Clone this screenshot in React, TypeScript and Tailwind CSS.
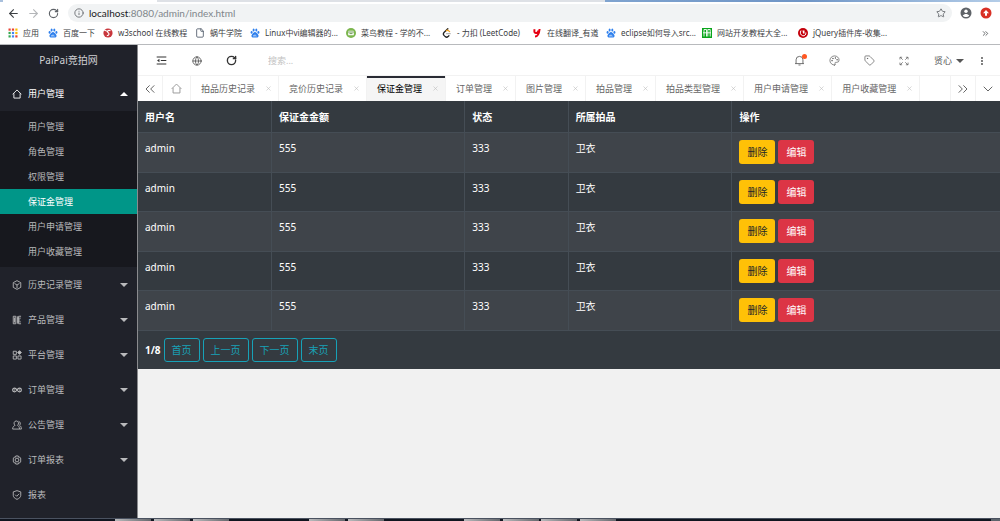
import type { ReactNode } from "react";
import {
  ArrowLeft,
  ArrowRight,
  ChevronDown,
  ChevronsLeft,
  ChevronsRight,
  File,
  Globe,
  Info,
  Palette,
  RotateCw,
  Star,
  Tag,
  X,
} from "lucide-react";

type Bookmark = { label: string; icon: ReactNode; className: string };
type MenuItem = { label: string; icon: ReactNode; children?: string[] };

/* Bookmark icons */

function AppsIcon() {
  const colors = ["#ea4335", "#ea4335", "#fbbc05", "#34a853", "#4285f4", "#fbbc05", "#34a853", "#4285f4", "#ea4335"];
  return (
    <svg viewBox="0 0 10 10" className="size-[10px]">
      {colors.map((fill, i) => (
        <rect key={i} x={0.5 + (i % 3) * 3.4} y={0.5 + Math.floor(i / 3) * 3.4} width="2.2" height="2.2" fill={fill} />
      ))}
    </svg>
  );
}

function PawIcon() {
  return (
    <svg viewBox="0 0 10 10" className="size-[10px]" fill="#2f80ed">
      <ellipse cx="1.6" cy="4.4" rx="1" ry="1.4" />
      <ellipse cx="3.6" cy="1.9" rx="1" ry="1.5" />
      <ellipse cx="6.3" cy="1.9" rx="1" ry="1.5" />
      <ellipse cx="8.4" cy="4.4" rx="1" ry="1.4" />
      <path d="M5 4c1.3 0 1.7 1.2 2.6 2 1 .9 1.3 2 .6 2.9-.7.9-2 .6-3.2.6s-2.5.3-3.2-.6c-.7-.9-.4-2 .6-2.9C3.300 5.200 3.700 4 5 4z" />
      <path d="M3.500 7.200v1h1v-1.500M5.600 6.700v1.500h1" stroke="#fff" strokeWidth="0.5" fill="none" />
    </svg>
  );
}

function SchoolIcon() {
  return (
    <svg viewBox="0 0 10 10" className="size-[10px]">
      <circle cx="5" cy="5" r="4.6" fill="#c8363c" />
      <path
        d="M0 1.500l4 1.800M7.500 2.800C5.500 1.800 3.500 3 5 4.500c1.500 1.200 1.400 3-1.200 3.200"
        stroke="#fff"
        strokeWidth="1.1"
        fill="none"
      />
    </svg>
  );
}

function RunoobIcon() {
  return (
    <svg viewBox="0 0 10 10" className="size-[10px]">
      <circle cx="5" cy="5" r="5" fill="#7cb64e" />
      <rect x="2.2" y="2.7" width="5.6" height="4.6" rx="0.6" fill="#fff" />
      <path d="M2.200 4h5.600M3.500 5.600h3" stroke="#4d7f2e" strokeWidth="0.8" />
    </svg>
  );
}

function LeetCodeIcon() {
  return (
    <svg viewBox="0 0 10 10" className="size-[10px]" fill="none" strokeLinecap="round" strokeWidth="1.3">
      <path d="M5.800.8L2 4.500c-.8.9-.8 2 0 2.900l1.200 1.200c.9.8 2 .8 2.900 0l.8-.8" stroke="#222" />
      <path d="M4.300 2.700c1-.7 2-.5 2.800.4l.5.500" stroke="#f0a020" />
      <path d="M4.600 5.700h3.600" stroke="#b3b3b3" />
    </svg>
  );
}

function YoudaoIcon() {
  return (
    <svg viewBox="0 0 10 10" className="size-[10px]" fill="none" stroke="#e60012" strokeWidth="2">
      <path d="M2.600 1.200c-.5 2.200-.3 3.800 1.200 3.800 1.400 0 2.400-1 2.800-2.600M7.600 1c-.4 3.800-1 7.600-4.600 7.600" />
    </svg>
  );
}

function SiteIcon() {
  return (
    <svg viewBox="0 0 10 10" className="size-[10px]">
      <rect width="10" height="10" fill="#0aa51c" />
      <path d="M2 8.500V1.500h2.500v7M5.800 8.500v-7h2.400v7M1 4.800h8" stroke="#fff" strokeWidth="0.9" fill="none" />
    </svg>
  );
}

function JQueryIcon() {
  return (
    <svg viewBox="0 0 10 10" className="size-[10px]">
      <circle cx="5" cy="5" r="5" fill="#c4000b" />
      <path d="M3 2.500c-1.300 2-.5 4.800 1.800 5.300 2 .3 3.400-1.300 3-3.300" stroke="#fff" strokeWidth="1" fill="none" />
      <path d="M4.500 2.500h2v3h-1.500z" fill="#fff" />
    </svg>
  );
}

const bookmarks: Bookmark[] = [
  { label: "应用", icon: <AppsIcon />, className: "w-10" },
  { label: "百度一下", icon: <PawIcon />, className: "w-[55px]" },
  { label: "w3school 在线教程", icon: <SchoolIcon />, className: "w-[92px]" },
  { label: "蜗牛学院", icon: <File className="size-[10px] text-gray-600" />, className: "w-[55px]" },
  { label: "Linux中vi编辑器的...", icon: <PawIcon />, className: "w-24" },
  { label: "菜鸟教程 - 学的不...", icon: <RunoobIcon />, className: "w-24" },
  { label: "- 力扣 (LeetCode)", icon: <LeetCodeIcon />, className: "w-[90px]" },
  { label: "在线翻译_有道", icon: <YoudaoIcon />, className: "w-[74px]" },
  { label: "eclipse如何导入src...", icon: <PawIcon />, className: "w-24" },
  { label: "网站开发教程大全...", icon: <SiteIcon />, className: "w-24" },
  { label: "jQuery插件库-收集...", icon: <JQueryIcon />, className: "w-24" },
];

/* Outline icons of the admin panel, all on a 16 unit grid */

function LineIcon({ children, className = "size-[10px]" }: { children: ReactNode; className?: string }) {
  return (
    <svg
      viewBox="0 0 16 16"
      className={className}
      fill="none"
      stroke="currentColor"
      strokeWidth="1.4"
      strokeLinejoin="round"
    >
      {children}
    </svg>
  );
}

const homePath = <path d="M1 8.500L8 1.500l7 7M3 7v7.500h10V7" />;

const menu: MenuItem[] = [
  {
    label: "用户管理",
    icon: homePath,
    children: ["用户管理", "角色管理", "权限管理", "保证金管理", "用户申请管理", "用户收藏管理"],
  },
  { label: "历史记录管理", icon: <path d="M8 1l6 3.200v7.600L8 15l-6-3.200V4.200zM4 5.500l4 2.500 4-2.500M8 8v5" /> },
  { label: "产品管理", icon: <path d="M2 2h4v12H2zM8.500 2v12M14.500 2h-4v12h4M8 5h6M8 8h5M8 11h6M4 4v8" /> },
  {
    label: "平台管理",
    icon: (
      <>
        <path d="M2 2h5v5H2zM2 9.500h5v5H2zM9.500 9.500h5v5h-5z" />
        <path d="M12 1l3 3-3 3-3-3z" fill="currentColor" />
      </>
    ),
  },
  {
    label: "订单管理",
    icon: (
      <path
        d="M8 8C6.500 5.500 5.500 5 4 5a3 3 0 0 0 0 6c1.500 0 2.500-.5 4-3s2.500-3 4-3a3 3 0 0 1 0 6c-1.500 0-2.500-.5-4-3M3 8h2M11 8h2"
        strokeWidth="1.8"
      />
    ),
  },
  {
    label: "公告管理",
    icon: (
      <path d="M7 1.500a3.800 3.800 0 0 0-2 7C3 9.500 1 11 1 14.500h11c0-3.500-1.500-5-3.300-6A3.800 3.800 0 0 0 7 1.500zM10.500 2a3.800 3.800 0 0 1 1.500 6.500c2 1 3 3 3 6h-3" />
    ),
  },
  {
    label: "订单报表",
    icon: (
      <>
        <circle cx="8" cy="8" r="3" />
        <path d="M6 1.500h4l.4 2 2-.2 2 3.200-1.200 1.500 1.200 1.500-2 3.200-2-.2-.4 2H6l-.4-2-2 .2-2-3.200L2.800 8 1.600 6.500l2-3.200 2 .2z" />
      </>
    ),
  },
  { label: "报表", icon: <path d="M8 1l6 2v5.500c0 3-2.500 5-6 6.500-3.500-1.500-6-3.500-6-6.500V3zM5 7.500l2.500 2.500L11.500 6" /> },
];

const tabs = [
  "拍品历史记录",
  "竞价历史记录",
  "保证金管理",
  "订单管理",
  "图片管理",
  "拍品管理",
  "拍品类型管理",
  "用户申请管理",
  "用户收藏管理",
];

const rows = Array.from({ length: 5 }, (_, id) => ({ id, user: "admin", amount: 555, status: 333, item: "卫衣" }));

const columns = [
  { title: "用户名", className: "w-[15.5%]" },
  { title: "保证金金额", className: "w-[22.4%]" },
  { title: "状态", className: "w-[12%]" },
  { title: "所属拍品", className: "w-[19%]" },
  { title: "操作", className: "" },
];

function BrowserBar() {
  return (
    <header className="shrink-0 border-b border-[#b8babd] bg-white">
      <div className="flex h-[2px] bg-[#dee1e6]">
        <div className="w-[3px] bg-[#a9c0dd]" />
        <div className="w-[154px] bg-white" />
        <div className="ml-auto w-[39.5%] bg-linear-to-r from-[#7fa3cf] via-[#6f95c6] to-[#b4cde8]" />
      </div>
      <div className="flex h-[22px] items-center text-[#5f6368]">
        <button aria-label="Back" className="ml-[7px] w-5">
          <ArrowLeft className="size-[13px] text-[#3c4043]" />
        </button>
        <button aria-label="Forward" className="w-5">
          <ArrowRight className="size-[13px] text-[#b4b6b9]" />
        </button>
        <button aria-label="Reload" className="w-[21px] pl-px">
          <RotateCw className="size-[11px]" strokeWidth={2.5} />
        </button>
        <div className="flex h-[18px] flex-1 items-center gap-[5px] rounded-full bg-[#f1f3f4] px-[6px]">
          <Info className="size-[10px]" />
          <span className="flex-1 font-['Lato'] text-[10px] text-[#80868b]">
            <span className="text-[#202124]">localhost</span>:8080/admin/index.html
          </span>
          <Star className="size-[10px]" />
        </div>
        <button aria-label="Profile" className="ml-2 w-5">
          <svg viewBox="0 0 12 12" className="size-3">
            <circle cx="6" cy="6" r="5.5" fill="#5f6368" />
            <circle cx="6" cy="4.3" r="1.7" fill="#fff" />
            <path d="M2.700 8.600c1.500-2.300 5.100-2.300 6.600 0-1.500 2-5.100 2-6.600 0z" fill="#fff" />
          </svg>
        </button>
        <button aria-label="Update" className="w-5">
          <svg viewBox="0 0 12 12" className="size-3">
            <circle cx="6" cy="6" r="5.5" fill="#d93025" />
            <path d="M6 3l3 3.200H7v2.600H5V6.200H3z" fill="#fff" />
          </svg>
        </button>
      </div>
      <nav className="flex h-5 items-center pb-[2px] pl-2 text-[8px] text-[#3c4043]">
        {bookmarks.map((bookmark) => (
          <a
            key={bookmark.label}
            href="#"
            className={`flex shrink-0 items-center gap-[5px] whitespace-nowrap ${bookmark.className}`}
          >
            <span className="shrink-0">{bookmark.icon}</span>
            {bookmark.label}
          </a>
        ))}
        <button aria-label="More bookmarks" className="mr-[10px] ml-auto">
          <ChevronsRight className="size-[9px]" />
        </button>
      </nav>
    </header>
  );
}

function Sidebar() {
  return (
    <aside className="w-[137px] shrink-0 overflow-hidden bg-[#20222a] text-[9px] text-[#b9babc]">
      <h1 className="flex h-[31px] items-center justify-center text-[10px] text-[#d0d1d3]">PaiPai竞拍网</h1>
      <ul>
        {menu.map((item) => (
          <li key={item.label}>
            <button
              aria-expanded={!!item.children}
              className={`flex h-[35px] w-full items-center gap-[6px] pr-[9px] pl-3 text-left ${item.children ? "text-white" : ""}`}
            >
              <LineIcon>{item.icon}</LineIcon>
              <span className="flex-1">{item.label}</span>
              {item.label !== "报表" && (
                <svg viewBox="0 0 8 4" className="h-1 w-2" fill="currentColor">
                  {item.children ? <path d="M0 4l4-4 4 4z" /> : <path d="M0 0l4 4 4-4z" />}
                </svg>
              )}
            </button>
            {item.children && (
              <ul className="bg-[#17181e] py-[3px]">
                {item.children.map((child) => (
                  <li key={child}>
                    <a
                      href="#"
                      className={`flex h-[25px] items-center pl-7 ${child === "保证金管理" ? "bg-[#009688] text-white" : ""}`}
                    >
                      {child}
                    </a>
                  </li>
                ))}
              </ul>
            )}
          </li>
        ))}
      </ul>
    </aside>
  );
}

function Toolbar() {
  return (
    <div className="flex h-[31px] shrink-0 items-center border-b border-[#f2f2f2] bg-white pt-px pl-[6px] text-[#555]">
      <button aria-label="Toggle menu" className="flex w-[35px] justify-center text-[#333]">
        <LineIcon className="size-[11px]">
          <path d="M1 3h14M7 8h8M1 13h14" strokeWidth="1.6" />
          <path d="M5 5.500v5L1.500 8z" fill="currentColor" stroke="none" />
        </LineIcon>
      </button>
      <button aria-label="Website" className="flex w-[35px] justify-center">
        <Globe className="size-[10px]" />
      </button>
      <button aria-label="Refresh" className="flex w-[35px] justify-center text-[#333]">
        <RotateCw className="size-[11px]" strokeWidth={3} />
      </button>
      <input
        type="text"
        aria-label="搜索"
        placeholder="搜索..."
        className="ml-[19px] w-24 text-[9px] outline-none placeholder:text-[#c2c2c2]"
      />
      <div className="ml-auto flex items-center">
        <button aria-label="Messages" className="flex w-[35px] justify-center">
          <span className="relative">
            <LineIcon className="size-[11px]">
              <path d="M1.500 12.500h13M3 12.500V7a5 5 0 0 1 10 0v5.500M6.500 14.500h3" strokeWidth="1.2" />
            </LineIcon>
            <span className="absolute -top-px -right-[2px] size-[5px] rounded-full bg-[#ff5722]" />
          </span>
        </button>
        <button aria-label="Theme" className="flex w-[35px] justify-center">
          <Palette className="size-[11px]" strokeWidth={1.5} />
        </button>
        <button aria-label="Notes" className="flex w-[35px] justify-center">
          <Tag className="size-[11px]" strokeWidth={1.5} />
        </button>
        <button aria-label="Fullscreen" className="flex w-[35px] justify-center">
          <LineIcon>
            <path
              d="M1.500 5.500V2h3.500M11 2h3.500v3.500M14.500 10.500V14H11M5 14H1.500v-3.500M2 2l4 4M14 2l-4 4M14 14l-4-4M2 14l4-4"
              strokeWidth="1.1"
            />
          </LineIcon>
        </button>
        <button className="ml-3 flex items-center gap-1 text-[9px]">
          贤心
          <svg viewBox="0 0 8 4" className="h-1 w-2" fill="#555">
            <path d="M0 0h8L4 4z" />
          </svg>
        </button>
        <button aria-label="More" className="flex w-9 justify-center">
          <svg viewBox="0 0 2 10" className="h-[10px] w-[2px]" fill="#444">
            <circle cx="1" cy="2" r="0.9" />
            <circle cx="1" cy="5" r="0.9" />
            <circle cx="1" cy="8" r="0.9" />
          </svg>
        </button>
      </div>
    </div>
  );
}

function TabBar() {
  return (
    <div className="flex h-[25px] shrink-0 items-stretch bg-white text-[9px] text-[#666]">
      <button aria-label="Scroll tabs left" className="flex w-[25px] items-center justify-center border-r border-[#f2f2f2]">
        <ChevronsLeft className="size-4" strokeWidth={1.5} />
      </button>
      <button aria-label="Home" className="flex w-7 items-center justify-center border-r border-[#f2f2f2] text-[#999]">
        <LineIcon className="size-[11px]">{homePath}</LineIcon>
      </button>
      {tabs.map((tab) => (
        <div
          key={tab}
          className={`flex shrink-0 items-center gap-[10px] border-r border-[#f2f2f2] pr-[6px] pl-[10px] ${
            tab === "保证金管理" ? "bg-[#f5f5f5] text-black shadow-[inset_0_2px_0_#292b34]" : ""
          }`}
        >
          <button>{tab}</button>
          <button aria-label={`关闭${tab}`}>
            <X className="size-[7px] text-[#bbb]" />
          </button>
        </div>
      ))}
      <button
        aria-label="Scroll tabs right"
        className="ml-auto flex w-[25px] items-center justify-center border-l border-[#f2f2f2]"
      >
        <ChevronsRight className="size-4" strokeWidth={1.5} />
      </button>
      <button aria-label="Tab list" className="flex w-[25px] items-center justify-center border-l border-[#f2f2f2]">
        <ChevronDown className="size-4" strokeWidth={1.5} />
      </button>
    </div>
  );
}

function DepositTable() {
  return (
    <table className="w-full table-fixed border-collapse bg-[#343a40] text-[10px] leading-4 text-white">
      <thead>
        <tr className="h-[31px]">
          {columns.map((column) => (
            <th
              key={column.title}
              className={`border-x border-b border-[#454d55] px-[7px] pt-px text-left font-bold first:border-l-0 last:border-r-0 ${column.className}`}
            >
              {column.title}
            </th>
          ))}
        </tr>
      </thead>
      <tbody>
        {rows.map((row) => (
          <tr
            key={row.id}
            className="align-top odd:h-10 odd:bg-[#3f444a] even:h-[39px] *:border-x *:border-y *:border-[#454d55] *:px-[7px] *:pt-[7px] *:first:border-l-0 *:last:border-r-0"
          >
            <td>{row.user}</td>
            <td>{row.amount}</td>
            <td>{row.status}</td>
            <td>{row.item}</td>
            <td>
              <div className="flex gap-[3px]">
                <button className="h-6 rounded-[3px] bg-[#ffc107] px-2 text-[#212529]">删除</button>
                <button className="h-6 rounded-[3px] bg-[#dc3545] px-2">编辑</button>
              </div>
            </td>
          </tr>
        ))}
      </tbody>
      <tfoot>
        <tr className="h-[39px]">
          <td colSpan={5} className="px-[7px]">
            <div className="flex items-center gap-[3px]">
              <b>1/8</b>
              {["首页", "上一页", "下一页", "末页"].map((label) => (
                <button key={label} className="h-6 rounded-[3px] border border-[#17a2b8] px-[7px] text-[#17a2b8]">
                  {label}
                </button>
              ))}
            </div>
          </td>
        </tr>
      </tfoot>
    </table>
  );
}

// only the top edge of the taskbar is on screen
function Taskbar() {
  const windows = ["ml-[115px]", "ml-[3px]", "ml-[3px]", "ml-20", "ml-[3px]", "ml-20", "ml-[3px]", "ml-[2px]", "ml-[3px]"];
  return (
    <footer className="flex h-[3px] shrink-0 border-t border-[#4a5260] bg-[#10151f]">
      {windows.map((margin, i) => (
        <div key={i} className={`w-9 bg-linear-to-r from-[#b9babc] to-[#66696e] ${margin}`} />
      ))}
      <div className="ml-auto w-[9px] bg-[#5d646c]" />
    </footer>
  );
}

export default function App() {
  return (
    <div className="flex h-screen flex-col overflow-hidden bg-[#f1f1f1] font-['Noto_Sans','Noto_Sans_CJK_SC',sans-serif]">
      <BrowserBar />
      <div className="flex min-h-0 flex-1">
        <Sidebar />
        <main className="flex min-w-0 flex-1 flex-col border-l border-[#8a8b8e]">
          <Toolbar />
          <TabBar />
          <DepositTable />
        </main>
      </div>
      <Taskbar />
    </div>
  );
}
